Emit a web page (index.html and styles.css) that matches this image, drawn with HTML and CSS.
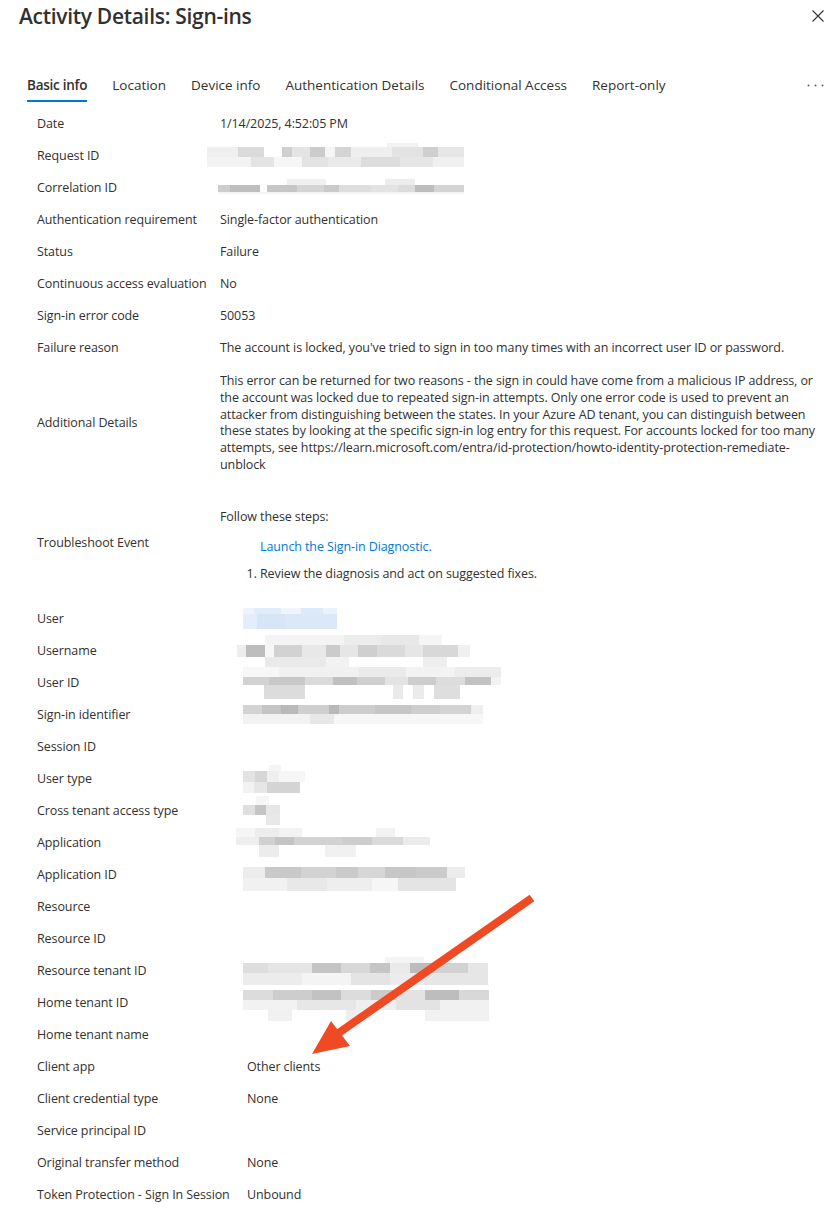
FILE: index.html
```html
<!DOCTYPE html>
<html lang="en">
<head>
  <meta charset="utf-8">
  <title>Activity Details: Sign-ins</title>
  <link rel="stylesheet" href="styles.css">
</head>
<body>
  <div class="blade">
    <header class="blade-header">
      <h1 class="blade-title">Activity Details: Sign-ins</h1>
      <button class="close-btn" aria-label="Close">
        <svg width="12" height="12" viewBox="0 0 12 12"><path d="M0.5 0.5 L11.5 11.5 M11.5 0.5 L0.5 11.5" stroke="#323130" stroke-width="1.1" fill="none"/></svg>
      </button>
    </header>

    <nav class="tabs">
      <a class="tab active">Basic info</a>
      <a class="tab">Location</a>
      <a class="tab">Device info</a>
      <a class="tab">Authentication Details</a>
      <a class="tab">Conditional Access</a>
      <a class="tab">Report-only</a>
      <span class="tab-more">
        <svg width="17" height="3" viewBox="0 0 17 3"><circle cx="1.5" cy="1.5" r="1" fill="#605e5c"/><circle cx="8.5" cy="1.5" r="1" fill="#605e5c"/><circle cx="15.5" cy="1.5" r="1" fill="#605e5c"/></svg>
      </span>
    </nav>

    <dl class="details details-first">
      <dt>Date</dt>
      <dd>1/14/2025, 4:52:05 PM</dd>

      <dt>Request ID</dt>
      <dd class="masked"><span class="redact redact-request"></span></dd>

      <dt>Correlation ID</dt>
      <dd class="masked"><span class="redact redact-correlation"></span></dd>

      <dt>Authentication requirement</dt>
      <dd>Single-factor authentication</dd>

      <dt>Status</dt>
      <dd>Failure</dd>

      <dt>Continuous access evaluation</dt>
      <dd>No</dd>

      <dt>Sign-in error code</dt>
      <dd>50053</dd>

      <dt>Failure reason</dt>
      <dd>The account is locked, you've tried to sign in too many times with an incorrect user ID or password.</dd>

      <dt>Additional Details</dt>
      <dd class="long-text">This error can be returned for two reasons - the sign in could have come from a malicious IP address, or the account was locked due to repeated sign-in attempts. Only one error code is used to prevent an attacker from distinguishing between the states. In your Azure AD tenant, you can distinguish between these states by looking at the specific sign-in log entry for this request. For accounts locked for too many attempts, see https://learn.microsoft.com/entra/id-protection/howto-identity-protection-remediate-unblock</dd>

      <dt>Troubleshoot Event</dt>
      <dd class="troubleshoot">
        <p class="steps-title">Follow these steps:</p>
        <a class="diag-link" href="#">Launch the Sign-in Diagnostic.</a>
        <ol class="steps">
          <li>Review the diagnosis and act on suggested fixes.</li>
        </ol>
      </dd>
    </dl>

    <dl class="details details-second">
      <dt>User</dt>
      <dd class="masked"><span class="redact redact-user"></span></dd>

      <dt>Username</dt>
      <dd class="masked"><span class="redact redact-username"></span></dd>

      <dt>User ID</dt>
      <dd class="masked"><span class="redact redact-userid"></span></dd>

      <dt>Sign-in identifier</dt>
      <dd class="masked"><span class="redact redact-signin"></span></dd>

      <dt>Session ID</dt>
      <dd></dd>

      <dt>User type</dt>
      <dd class="masked"><span class="redact redact-usertype"></span></dd>

      <dt>Cross tenant access type</dt>
      <dd class="masked"><span class="redact redact-cross"></span></dd>

      <dt>Application</dt>
      <dd class="masked"><span class="redact redact-app"></span></dd>

      <dt>Application ID</dt>
      <dd class="masked"><span class="redact redact-appid"></span></dd>

      <dt>Resource</dt>
      <dd></dd>

      <dt>Resource ID</dt>
      <dd></dd>

      <dt>Resource tenant ID</dt>
      <dd class="masked"><span class="redact redact-restenant"></span></dd>

      <dt>Home tenant ID</dt>
      <dd class="masked"><span class="redact redact-hometenant"></span></dd>

      <dt>Home tenant name</dt>
      <dd></dd>

      <dt>Client app</dt>
      <dd>Other clients</dd>

      <dt>Client credential type</dt>
      <dd>None</dd>

      <dt>Service principal ID</dt>
      <dd></dd>

      <dt>Original transfer method</dt>
      <dd>None</dd>

      <dt>Token Protection - Sign In Session</dt>
      <dd>Unbound</dd>
    </dl>

    <!-- annotation arrow drawn over the page -->
    <svg class="annotation" width="260" height="180" viewBox="300 890 260 180">
      <line x1="532" y1="898" x2="330" y2="1039" stroke="#f04a24" stroke-width="8" stroke-linecap="butt"/>
      <polygon points="312,1054 331,1021 350,1046" fill="#f04a24"/>
    </svg>
  </div>
</body>
</html>
```

FILE: styles.css
```css
body {
  margin: 0;
  background: #fff;
  color: #323130;
  font-family: 'Open Sans', 'Noto Sans', sans-serif;
  font-size: 12.5px;
  letter-spacing: -0.1px;
}

.blade {
  position: relative;
  width: 835px;
  height: 1212px;
  overflow: hidden;
}

.blade-header {
  display: flex;
  align-items: center;
  justify-content: space-between;
  height: 32px;
  padding: 0 11px 0 19px;
}

.blade-title {
  margin: 0;
  font-size: 21px;
  font-weight: 600;
  line-height: 32px;
  letter-spacing: -0.3px;
}

.close-btn {
  background: none;
  border: none;
  padding: 0;
  width: 12px;
  height: 12px;
  display: flex;
}

.tabs {
  display: flex;
  align-items: flex-start;
  gap: 25px;
  margin-top: 43px;
  padding: 0 11px 0 27px;
}

.tab {
  font-size: 13.5px;
  letter-spacing: 0;
  line-height: 20px;
  padding-bottom: 5px;
  border-bottom: 2px solid transparent;
  color: #323130;
  cursor: pointer;
}

.tab.active {
  font-weight: 600;
  letter-spacing: -0.25px;
  border-bottom-color: #0078d4;
}

.tab-more {
  margin-left: auto;
  height: 20px;
  display: flex;
  align-items: center;
}

.details {
  display: grid;
  align-items: center;
  column-gap: 14px;
  margin: 0;
  padding: 0 10px 0 37px;
}

.details-first {
  grid-template-columns: 169px 1fr;
  margin-top: 5px;
}

.details-second {
  grid-template-columns: 196px 1fr;
}

.details dt,
.details dd {
  margin: 0;
  min-height: 17px;
  line-height: 17px;
  padding: 7.5px 0;
}

.details dt {
  white-space: nowrap;
}

.details dd.masked {
  display: flex;
  align-items: center;
  height: 17px;
}

.details dd.long-text {
  padding: 10px 0 9px;
  line-height: 16.8px;
}

.details dd.troubleshoot {
  padding: 25.5px 0 20.5px;
}

.steps-title {
  margin: 0;
}

.diag-link {
  display: block;
  margin: 13px 0 0 40px;
  color: #0078d4;
  text-decoration: none;
}

.steps {
  margin: 10px 0 0;
  padding-left: 40px;
}

/* pixelated redactions */
.redact {
  display: block;
  flex: none;
  margin-left: -4px;
}

.redact-request {
  margin-left: -13px;
  width: 257px;
  height: 24px;
  background:
    linear-gradient(90deg, #fff 0 70%, #f2f2f2 70% 82%, #fff 82%) 0 0 / 100% 4px no-repeat,
    linear-gradient(90deg, #efefef 0 12%, #dadada 12% 22%, #fff 22% 29%, #cfcfcf 29% 33%, #e4e4e4 33% 40%, #cbcbcb 40% 46%, #f5f5f5 46% 50%, #d4d4d4 50% 56%, #efefef 56% 72%, #e3e3e3 72% 84%, #cfcfcf 84% 90%, #e6e6e6 90%) 0 4px / 100% 10px no-repeat,
    linear-gradient(90deg, #f3f3f3 0 17%, #e4e4e4 17% 26%, #f6f6f6 26% 37%, #e2e2e2 37% 47%, #eaeaea 47% 60%, #dcdcdc 60% 75%, #e6e6e6 75% 88%, #f0f0f0 88%) 0 14px / 100% 10px no-repeat;
}

.redact-correlation {
  margin-left: -2px;
  width: 246px;
  height: 17px;
  background:
    linear-gradient(90deg, #fff 0 28%, #f0f0f0 28% 44%, #fff 44% 68%, #ececec 68% 80%, #fff 80%) 0 0 / 100% 6px no-repeat,
    linear-gradient(90deg, #cdcdcd 0 5%, #bebebe 5% 17%, #fff 17% 20%, #c6c6c6 20% 32%, #d4d4d4 32% 43%, #cacaca 43% 49%, #dedede 49% 62%, #e3e3e3 62% 73%, #dcdcdc 73% 80%, #bdbdbd 80% 88%, #d4d4d4 88%) 0 6px / 100% 7px no-repeat,
    linear-gradient(90deg, #f4f4f4 0 100%) 0 13px / 100% 2px no-repeat;
}

.redact-user {
  width: 94px;
  height: 21px;
  background:
    linear-gradient(90deg, #edf4fc 0 12%, #e0ecf9 12% 40%, #eef5fd 40% 62%, #dce9f7 62% 85%, #e9f1fb 85%) 0 0 / 100% 6px no-repeat,
    linear-gradient(90deg, #e3eefa 0 15%, #d6e6f6 15% 45%, #dae8f7 45%) 0 6px / 100% 15px no-repeat;
}

.redact-username {
  margin-left: -10px;
  width: 233px;
  height: 32px;
  background:
    linear-gradient(90deg, #fff 0 12%, #f4f4f4 12% 46%, #ececec 46% 62%, #e8e8e8 62% 78%, #f5f5f5 78% 88%, #fff 88%) 0 0 / 100% 10px no-repeat,
    linear-gradient(90deg, #eee 0 4%, #bdbdbd 4% 12%, #f6f6f6 12% 16%, #d2d2d2 16% 28%, #e8e8e8 28% 38%, #cbcbcb 38% 44%, #e6e6e6 44% 52%, #cfcfcf 52% 60%, #dadada 60% 72%, #e6e6e6 72% 80%, #d8d8d8 80% 95%, #f0f0f0 95%) 0 10px / 100% 12px no-repeat,
    linear-gradient(90deg, #fff 0 12%, #eaeaea 12% 38%, #f2f2f2 38% 48%, #fff 48% 80%, #eeeeee 80% 90%, #fff 90%) 0 22px / 100% 10px no-repeat;
}

.redact-userid {
  width: 258px;
  height: 32px;
  background:
    linear-gradient(90deg, #f7f7f7 0 14%, #f1f1f1 14% 45%, #eaeaea 45% 63%, #f3f3f3 63% 82%, #ececec 82%) 0 0 / 100% 10px no-repeat,
    linear-gradient(90deg, #d2d2d2 0 10%, #c8c8c8 10% 24%, #dadada 24% 35%, #c0c0c0 35% 44%, #cfcfcf 44% 55%, #e3e3e3 55% 64%, #cdcdcd 64% 75%, #dcdcdc 75% 86%, #c2c2c2 86% 96%, #f2f2f2 96%) 0 10px / 100% 8px no-repeat,
    linear-gradient(90deg, #fff 0 8%, #dcdcdc 8% 24%, #fff 24% 58%, #eaeaea 58% 62%, #fff 62% 66%, #ebebeb 66% 70%, #fff 70% 74%, #dedede 74% 84%, #fff 84%) 0 18px / 100% 14px no-repeat;
}

.redact-signin {
  width: 240px;
  height: 19px;
  background:
    linear-gradient(90deg, #d3d3d3 0 8%, #c4c4c4 8% 16%, #b9b9b9 16% 23%, #cfcfcf 23% 36%, #b8b8b8 36% 40%, #cdcdcd 40% 55%, #c6c6c6 55% 70%, #cecece 70% 82%, #d3d3d3 82% 95%, #efefef 95%) 0 0 / 100% 9px no-repeat,
    linear-gradient(90deg, #f2f2f2 0 28%, #e8e8e8 28% 38%, #f7f7f7 38% 100%) 0 9px / 100% 10px no-repeat;
}

.redact-usertype {
  width: 62px;
  height: 28px;
  background:
    linear-gradient(90deg, #fff 0 42%, #f4f4f4 42% 62%, #fff 62%) 0 0 / 100% 6px no-repeat,
    linear-gradient(90deg, #e3e3e3 0 20%, #d6d6d6 20% 38%, #efefef 38% 58%, #f6f6f6 58% 100%) 0 6px / 100% 11px no-repeat,
    linear-gradient(90deg, #f2f2f2 0 18%, #e6e6e6 18% 38%, #d4d4d4 38% 92%, #fff 92%) 0 17px / 100% 11px no-repeat;
}

.redact-cross {
  width: 37px;
  height: 29px;
  background:
    linear-gradient(90deg, #fff 0 35%, #f6f6f6 35% 70%, #fff 70%) 0 0 / 100% 9px no-repeat,
    linear-gradient(90deg, #dfdfdf 0 32%, #c5c5c5 32% 62%, #e6e6e6 62% 100%) 0 9px / 100% 10px no-repeat,
    linear-gradient(90deg, #fff 0 62%, #e8e8e8 62% 100%) 0 19px / 100% 10px no-repeat;
}

.redact-app {
  margin-left: -11px;
  width: 194px;
  height: 29px;
  background:
    linear-gradient(90deg, #f5f5f5 0 10%, #ededed 10% 22%, #f2f2f2 22% 34%, #fff 34% 72%, #f2f2f2 72% 82%, #fff 82%) 0 0 / 100% 9px no-repeat,
    linear-gradient(90deg, #eee 0 12%, #d0d0d0 12% 20%, #c4c4c4 20% 30%, #d2d2d2 30% 55%, #cdcdcd 55% 70%, #dadada 70% 86%, #ebebeb 86% 100%) 0 9px / 100% 8px no-repeat,
    linear-gradient(90deg, #fff 0 12%, #ececec 12% 22%, #fff 22% 46%, #f1f1f1 46% 62%, #fff 62%) 0 17px / 100% 12px no-repeat;
}

.redact-appid {
  width: 222px;
  height: 24px;
  margin-top: 8px;
  background:
    linear-gradient(90deg, #ececec 0 10%, #c9c9c9 10% 26%, #d2d2d2 26% 42%, #cacaca 42% 52%, #d6d6d6 52% 64%, #c7c7c7 64% 78%, #cbcbcb 78% 92%, #ececec 92%) 0 0 / 100% 11px no-repeat,
    linear-gradient(90deg, #f1f1f1 0 20%, #e8e8e8 20% 38%, #eeeeee 38% 58%, #f6f6f6 58% 70%, #e4e4e4 70% 96%, #fff 96%) 0 11px / 100% 13px no-repeat;
}

.redact-restenant {
  width: 245px;
  height: 28px;
  background:
    linear-gradient(90deg, #fff 0 58%, #f4f4f4 58% 74%, #fff 74%) 0 0 / 100% 6px no-repeat,
    linear-gradient(90deg, #dedede 0 10%, #e5e5e5 10% 28%, #c4c4c4 28% 40%, #d8d8d8 40% 52%, #c5c5c5 52% 60%, #eaeaea 60% 68%, #bcbcbc 68% 78%, #d2d2d2 78% 92%, #e6e6e6 92%) 0 6px / 100% 10px no-repeat,
    linear-gradient(90deg, #ececec 0 24%, #f4f4f4 24% 44%, #e4e4e4 44% 60%, #ececec 60% 74%, #e6e6e6 74% 100%) 0 16px / 100% 12px no-repeat;
}

.redact-hometenant {
  width: 246px;
  height: 31px;
  margin-top: 6px;
  background:
    linear-gradient(90deg, #dcdcdc 0 12%, #cdcdcd 12% 28%, #c2c2c2 28% 40%, #dcdcdc 40% 52%, #cbcbcb 52% 62%, #e3e3e3 62% 74%, #bdbdbd 74% 88%, #d8d8d8 88%) 0 0 / 100% 10px no-repeat,
    linear-gradient(90deg, #f2f2f2 0 22%, #e7e7e7 22% 46%, #efefef 46% 62%, #e3e3e3 62% 80%, #f1f1f1 80%) 0 10px / 100% 10px no-repeat,
    linear-gradient(90deg, #fff 0 10%, #f1f1f1 10% 20%, #fff 20% 42%, #efefef 42% 48%, #fff 48% 74%, #f1f1f1 74% 100%) 0 20px / 100% 11px no-repeat;
}

.annotation {
  position: absolute;
  left: 300px;
  top: 890px;
  pointer-events: none;
}
```
